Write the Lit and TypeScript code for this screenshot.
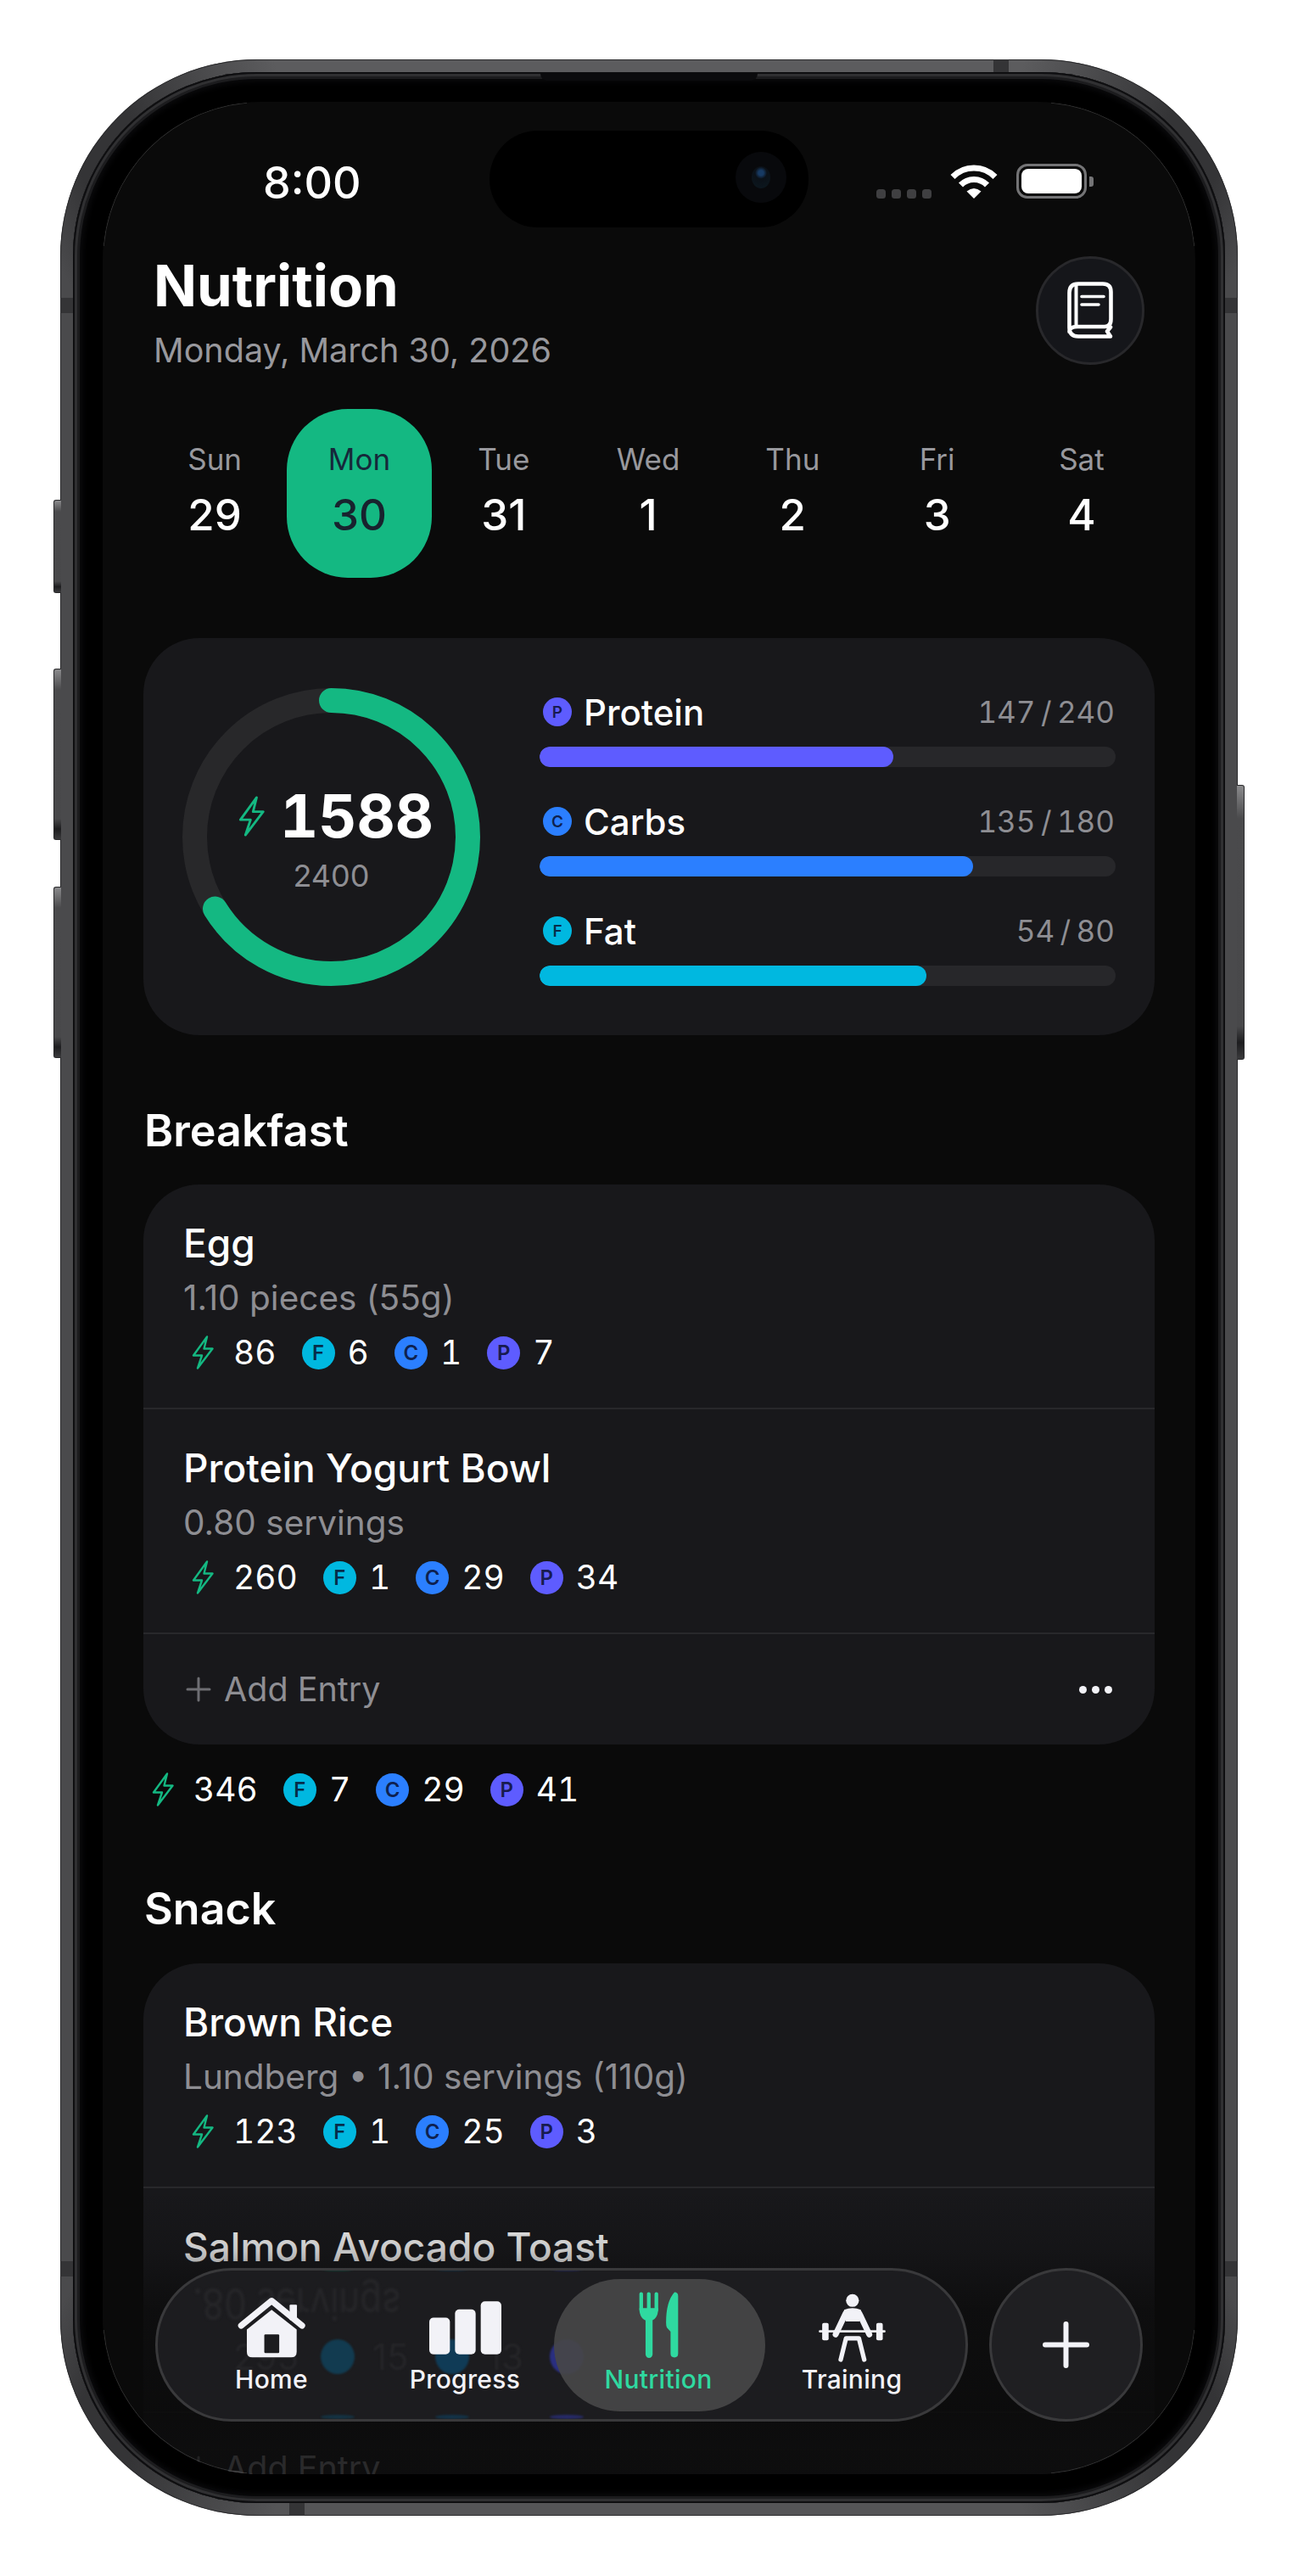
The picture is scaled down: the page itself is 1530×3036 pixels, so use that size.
import { LitElement, html, css, svg } from "lit";
import { customElement } from "lit/decorators.js";

type Macro = { cal: number; f: number; c: number; p: number };
type Food = { name: string; sub: string; macro: Macro };

const DAYS = [
  ["Sun", "29"], ["Mon", "30"], ["Tue", "31"], ["Wed", "1"], ["Thu", "2"], ["Fri", "3"], ["Sat", "4"],
];
const GOALS = [
  { key: "p", letter: "P", name: "Protein", val: 147, max: 240, pct: 61.4 },
  { key: "c", letter: "C", name: "Carbs", val: 135, max: 180, pct: 75.3 },
  { key: "f", letter: "F", name: "Fat", val: 54, max: 80, pct: 67.1 },
];
const BREAKFAST: Food[] = [
  { name: "Egg", sub: "1.10 pieces (55g)", macro: { cal: 86, f: 6, c: 1, p: 7 } },
  { name: "Protein Yogurt Bowl", sub: "0.80 servings", macro: { cal: 260, f: 1, c: 29, p: 34 } },
];
const SNACK: Food[] = [
  { name: "Brown Rice", sub: "Lundberg • 1.10 servings (110g)", macro: { cal: 123, f: 1, c: 25, p: 3 } },
  { name: "Salmon Avocado Toast", sub: "0.80 servings", macro: { cal: 295, f: 15, c: 13, p: 30 } },
];
const RING_R = 161;
const RING_C = 2 * Math.PI * RING_R;

const bolt = (cls = "bolt") => html`<svg class=${cls} viewBox="0 0 26 40" fill="none" stroke="#14b882" stroke-width="2.4" stroke-linejoin="round" stroke-linecap="round">
  <path d="M18 1.5 2 23.5h10L7 38.5 24.5 15.5H14.5Z"/></svg>`;

const homeIcon = html`<svg class="i-home" viewBox="265 110 245 220">
  <path d="M280 212 388 124 496 212" fill="none" stroke="#f2f2f7" stroke-width="22" stroke-linecap="round" stroke-linejoin="round"/>
  <rect x="452" y="138" width="26" height="55" rx="3" fill="#f2f2f7"/>
  <path d="M388 156 300 226V305Q300 325 320 325H457Q477 325 477 305V226Z" fill="#f2f2f7"/>
  <rect x="362" y="243" width="53" height="67" rx="4" fill="#1c1c1f"/></svg>`;
const barsIcon = html`<svg class="i-bars" viewBox="945 127 255 188" fill="#f2f2f7">
  <rect x="945" y="185" width="73" height="130" rx="15"/>
  <rect x="1036" y="156" width="73" height="159" rx="15"/>
  <rect x="1127" y="127" width="73" height="188" rx="15"/></svg>`;
const forkIcon = html`<svg class="i-fork" viewBox="20 18 148 240">
  <g stroke="#2fd9a0" stroke-linecap="round" fill="none">
    <path d="M31.5 28V85M58.5 28V85M85.5 28V85" stroke-width="13"/>
    <path d="M59.5 120V243" stroke-width="25"/></g>
  <path d="M25 78H92Q92 122 59 124 25 122 25 78Z" fill="#2fd9a0"/>
  <path d="M150 22Q163 22 163 36V240Q163 254 150 254 136 254 136 240V162L123 148Q120 143 120 130 120 55 150 22Z" fill="#2fd9a0"/></svg>`;
const liftIcon = html`<svg class="i-lift" viewBox="660 20 238 245">
  <circle cx="780" cy="45" r="23" fill="#f2f2f7"/>
  <g stroke="#f2f2f7" fill="none" stroke-linecap="round" stroke-linejoin="round">
    <path d="M756 90 720 166M804 90 840 166" stroke-width="21"/>
    <path d="M664 155H894" stroke-width="8"/>
    <path d="M738 256 757 180H803L822 256" stroke-width="16"/></g>
  <path d="M750 78Q780 66 810 78L806 120H756Z" fill="#f2f2f7"/>
  <rect x="672" y="125" width="23" height="62" rx="6" fill="#f2f2f7"/>
  <rect x="865" y="125" width="23" height="62" rx="6" fill="#f2f2f7"/></svg>`;

@customElement("app-root")
export class AppRoot extends LitElement {
  static styles = css`
    :host { display: block; width: 1530px; height: 3036px; background: #fff; font-family: Inter, "Liberation Sans", sans-serif; overflow: hidden; }
    .stage { padding: 70px 0 0 71px; }
    .phone {
      position: relative; width: 1388px; height: 2895px; box-sizing: border-box; padding: 15px;
      border-radius: 232px;
      background: conic-gradient(#5c5c5e 0 17deg, #343436 24deg 27deg, #4a4a4c 30deg 150deg, #343436 153deg 156deg, #555557 163deg 197deg, #343436 204deg 207deg, #4a4a4c 210deg 330deg, #343436 333deg 336deg, #5c5c5e 343deg);
      box-shadow: inset 0 0 0 1px #2c2c2e;
    }
    .bezel {
      width: 100%; height: 100%; box-sizing: border-box; padding: 35px; border-radius: 217px; background: #000;
      box-shadow:
        inset 0 0 0 2px #0e0e10,
        inset 0 0 0 5px #303032,
        inset 0 0 0 8px #1c1c1e,
        inset 0 0 7px 11px #0b0b0d;
    }
    .btn { position: absolute; background: linear-gradient(#8a8a8c 0, #4a4a4c 12%, #48484a 88%, #1d1d1f 94%, #3a3a3c 100%); border: 1px solid #2a2a2c; box-sizing: border-box; }
    .btn.l { left: -8px; width: 9px; border-radius: 3px 0 0 3px; border-right: 0; }
    .btn.r { right: -8px; width: 9px; border-radius: 0 3px 3px 0; border-left: 0; }
    .b1 { top: 519px; height: 110px; }
    .b2 { top: 718px; height: 202px; }
    .b3 { top: 975px; height: 202px; }
    .b4 { top: 855px; height: 324px; }
    .ant { position: absolute; background: #343436; }
    .ant.v { width: 15px; height: 18px; }
    .ant.h { width: 18px; height: 15px; }
    .a1 { left: 0; top: 281px; } .a2 { right: 0; top: 281px; }
    .a3 { left: 0; top: 2595px; } .a4 { right: 0; top: 2595px; }
    .a5 { left: 1100px; top: 0; } .a6 { left: 270px; bottom: 0; }
    .speaker { position: absolute; left: 566px; top: 16px; width: 256px; height: 9px; background: #0b0b0d; border-radius: 0 0 8px 8px; }

    .screen { position: relative; width: 1288px; height: 2796px; background: #0a0a0a; border-radius: 186px; overflow: hidden; color: #fff; }
    .screen::after {
      content: ""; position: absolute; inset: 0; border-radius: 186px; border: 1px solid rgba(255,255,255,.16); pointer-events: none;
      -webkit-mask: linear-gradient(#000 0 0) 0 0/170px 170px no-repeat, linear-gradient(#000 0 0) 100% 0/170px 170px no-repeat,
        linear-gradient(#000 0 0) 0 100%/170px 170px no-repeat, linear-gradient(#000 0 0) 100% 100%/170px 170px no-repeat;
      mask: linear-gradient(#000 0 0) 0 0/170px 170px no-repeat, linear-gradient(#000 0 0) 100% 0/170px 170px no-repeat,
        linear-gradient(#000 0 0) 0 100%/170px 170px no-repeat, linear-gradient(#000 0 0) 100% 100%/170px 170px no-repeat;
    }
    .island { position: absolute; left: 456px; top: 34px; width: 376px; height: 114px; border-radius: 57px; background: #000; }
    .cam { position: absolute; left: 290px; top: 25px; width: 60px; height: 60px; border-radius: 50%; background: #08090c; display: flex; align-items: center; justify-content: center; }
    .cam i { display: block; width: 22px; height: 26px; border-radius: 50%; background: radial-gradient(circle at 50% 30%, #173a63 0 3px, #0b1118 7px, #0c1820 100%); }

    .status { height: 150px; box-sizing: border-box; padding: 66px 120px 0 189px; display: flex; align-items: flex-start; }
    .time { font-size: 52px; line-height: 60px; font-weight: 550; }
    .sys { margin-left: auto; display: flex; align-items: flex-end; margin-top: 7px; }
    .dots { display: flex; gap: 7px; margin-right: 22px; }
    .dots i { display: block; width: 11px; height: 11px; border-radius: 3.5px; background: #3f3f41; }
    .wifi { width: 56px; height: 41px; display: block; margin-right: 22px; }
    .batt { width: 83px; height: 41px; box-sizing: border-box; border: 3px solid #747476; border-radius: 13px; padding: 3px 3px; }
    .batt i { display: block; height: 100%; width: 100%; border-radius: 8px; background: #fff; }
    .tip { width: 5px; height: 12px; margin: 0 0 14px 3px; background: #747476; border-radius: 0 3px 3px 0; }

    .header { display: flex; align-items: center; justify-content: space-between; padding: 25px 60px 0 60px; }
    h1 { margin: 0; font-size: 67px; line-height: 84px; font-weight: 700; }
    .date { margin-top: 7px; font-size: 39.5px; line-height: 54px; color: #98989d; }
    .round { width: 128px; height: 128px; margin-top: -3px; box-sizing: border-box; border-radius: 50%; background: #15161a; border: 3px solid #28282b; display: flex; align-items: center; justify-content: center; }
    .book { width: 80px; height: 85px; display: block; }

    .cal { display: grid; grid-template-columns: repeat(7, 170.3px); margin: 42px 0 0 47px; }
    .day { height: 199px; box-sizing: border-box; padding-top: 37px; border-radius: 72px; text-align: center; }
    .day b { display: block; font-size: 35px; line-height: 44px; font-weight: 400; color: #98989d; }
    .day span { display: block; margin-top: 14px; font-size: 51px; line-height: 60px; font-weight: 550; }
    .day.on { background: #14b882; }
    .day.on b { color: #16283a; }
    .day.on span { color: #18222e; }

    .card { margin: 0 48px; background: #18181b; border-radius: 66px; }
    .summary { margin-top: 71px; height: 468px; display: flex; align-items: center; padding: 0 46px 0 46px; box-sizing: border-box; }
    .ringbox { position: relative; width: 351px; height: 351px; flex: none; }
    .ringbox > svg { display: block; width: 351px; height: 351px; transform: rotate(-90deg); }
    .ringtxt { position: absolute; inset: 4px 0 0; display: flex; flex-direction: column; align-items: center; justify-content: center; }
    .bigrow { display: flex; align-items: center; margin-left: 11px; height: 80px; }
    .bolt-lg { width: 31px; height: 50px; display: block; margin-right: 18px; }
    .big { font-size: 70px; line-height: 80px; font-weight: 700; font-variant-numeric: tabular-nums; }
    .goal { margin-top: 8px; font-size: 36px; line-height: 44px; color: #8e8e93; }
    .bars { flex: 1; margin-left: 70px; margin-top: 3px; display: flex; flex-direction: column; gap: 38px; }
    .head { display: flex; align-items: center; height: 50px; box-sizing: content-box; padding: 1px 1px 0 4px; margin-bottom: 16px; }
    .head .badge { width: 34px; height: 34px; font-size: 19px; margin-right: 14px; }
    .head .nm { font-size: 42px; font-weight: 500; }
    .head .vl { margin-left: auto; font-size: 35px; color: #8e8e93; font-variant-numeric: tabular-nums; word-spacing: -3px; }
    .track { height: 24px; border-radius: 12px; background: #27272a; overflow: hidden; }
    .track i { display: block; height: 100%; border-radius: 12px; }
    .bg-p { background: #5e5cff; } .bg-c { background: #2b7fff; } .bg-f { background: #00b8e0; }

    .badge { flex: none; width: 39px; height: 39px; border-radius: 50%; display: flex; align-items: center; justify-content: center; font-size: 24px; font-weight: 600; color: rgba(8,12,40,.82); }
    h2 { margin: 80px 48px 30px 49px; font-size: 52px; line-height: 66px; font-weight: 600; }
    h2.next { margin-top: 88px; margin-bottom: 31px; }
    .item { padding: 42px 47px 45px; border-bottom: 2px solid #28282b; }
    .name { font-size: 46px; line-height: 54px; font-weight: 550; }
    .sub { margin-top: 8px; font-size: 40.5px; line-height: 60px; color: #8e8e93; }
    .macros { display: flex; align-items: center; height: 40px; margin-top: 14px; }
    .bolt { flex: none; width: 26px; height: 40px; display: block; margin: 0 23px 0 10px; }
    .num { font-size: 39px; line-height: 40px; font-weight: 400; font-variant-numeric: tabular-nums; }
    .macros .badge { margin-left: 30px; }
    .macros .badge + .num { margin-left: 15px; }
    .total { margin: 33px 48px 0 48px; }
    .add { height: 130px; display: flex; align-items: center; padding: 0 50px 0 50px; color: #8e8e93; font-size: 39.5px; }
    .plus { width: 30px; height: 30px; display: block; margin-right: 15px; }
    .more { margin-left: auto; display: flex; gap: 6px; }
    .more i { display: block; width: 9px; height: 9px; border-radius: 50%; background: #f2f2f7; }

    .fade { position: absolute; left: 0; right: 0; bottom: 0; height: 336px; pointer-events: none;
      background: linear-gradient(rgba(10,10,10,0) 0, rgba(10,10,10,.22) 21%, rgba(10,10,10,.72) 42%, rgba(10,10,10,.88) 78%, rgba(10,10,10,.76) 92%, rgba(10,10,10,.76) 100%); }
    .dock { position: absolute; left: 62px; top: 2553px; display: flex; gap: 25px; }
    .bar { position: relative; width: 958px; height: 181px; box-sizing: border-box; border-radius: 90px; background: #1c1c1f; border: 3px solid #39393b; overflow: hidden; display: flex; padding: 10px 0 0 20px; }
    .fab { width: 181px; height: 181px; box-sizing: border-box; border-radius: 50%; background: #1f1f22; border: 3px solid #39393b; display: flex; align-items: center; justify-content: center; }
    .fab svg { width: 55px; height: 55px; display: block; }
    .ghost { position: absolute; inset: -3px; pointer-events: none; overflow: hidden; }
    .g { position: absolute; filter: blur(1px); }
    .g-sv { left: 44px; top: 20px; font-size: 42px; line-height: 44px; color: #262629; transform: scaleY(-1.2); white-space: nowrap; filter: blur(1.4px); }
    .g-n { top: 84px; font-size: 42px; line-height: 42px; color: #252528; }
    .g-dot { top: 84px; width: 40px; height: 41px; border-radius: 50%; }
    .g-top { top: -1px; width: 38px; height: 4px; border-radius: 50%; }
    .g-bot { top: 173px; width: 40px; height: 5px; border-radius: 50%; opacity: .75; }
    .teal { background: #123b50; } .blue { background: #103b56; } .vio { background: #2a2f80; } .grn { background: #0e5a45; }

    .tab { position: relative; flex: none; width: 228px; height: 156px; box-sizing: border-box; padding-top: 14px; text-align: center; }
    .tab.on::before { content: ""; position: absolute; left: -9px; right: -12px; top: 0; bottom: 0; border-radius: 78px; background: rgba(70,70,72,.92); }
    .ico { position: relative; height: 87px; display: flex; align-items: center; justify-content: center; }
    .ico svg { display: block; }
    .lbl { position: relative; margin-top: -1px; font-size: 30px; line-height: 36px; font-weight: 550; letter-spacing: .3px; color: #f2f2f7; }
    .tab.on .lbl { color: #2fd9a0; }
    .i-home { width: 82px; height: 73px; }
    .i-bars { width: 85px; height: 63px; }
    .i-fork { width: 49px; height: 80px; margin-top: -7px; }
    .i-lift { width: 79px; height: 81px; }
  `;

  private badge(k: string) {
    return html`<span class="badge bg-${k}">${k.toUpperCase()}</span>`;
  }
  private macroRow(m: Macro) {
    return html`<div class="macros">${bolt()}<span class="num">${m.cal}</span>
      ${this.badge("f")}<span class="num">${m.f}</span>
      ${this.badge("c")}<span class="num">${m.c}</span>
      ${this.badge("p")}<span class="num">${m.p}</span></div>`;
  }
  private food(f: Food) {
    return html`<div class="item"><div class="name">${f.name}</div><div class="sub">${f.sub}</div>${this.macroRow(f.macro)}</div>`;
  }
  private addRow(more: boolean) {
    return html`<div class="add">
      <svg class="plus" viewBox="0 0 30 30" stroke="#6e6e73" stroke-width="3" stroke-linecap="round"><path d="M15 2V28M2 15H28"/></svg>
      <span>Add Entry</span>
      ${more ? html`<span class="more"><i></i><i></i><i></i></span>` : ""}</div>`;
  }

  render() {
    const pct = 1588 / 2400;
    return html`<div class="stage"><div class="phone">
      <div class="btn l b1"></div><div class="btn l b2"></div><div class="btn l b3"></div><div class="btn r b4"></div>
      <div class="ant v a1"></div><div class="ant v a2"></div><div class="ant v a3"></div><div class="ant v a4"></div>
      <div class="ant h a5"></div><div class="ant h a6"></div>
      <div class="bezel">
      <div class="screen">
        <div class="status">
          <div class="time">8:00</div>
          <div class="sys">
            <div class="dots"><i></i><i></i><i></i><i></i></div>
            <svg class="wifi" viewBox="0 0 56 41" fill="none" stroke="#fff" stroke-width="7">
              <path d="M3 15.5A35 35 0 0 1 53 15.5"/><path d="M12.5 25A21.5 21.5 0 0 1 43.5 25"/>
              <path d="M28 41 19.5 32.5Q28 25.5 36.5 32.5Z" fill="#fff" stroke="none"/></svg>
            <div class="batt"><i></i></div><div class="tip"></div>
          </div>
        </div>
        <div class="island"><div class="cam"><i></i></div></div>

        <div class="header">
          <div><h1>Nutrition</h1><div class="date">Monday, March 30, 2026</div></div>
          <div class="round"><svg class="book" viewBox="0 0 80 85" fill="none" stroke="#fff" stroke-linecap="round" stroke-linejoin="round">
            <path d="M15.5 21Q15.5 10.5 26 10.5H55Q64.5 10.5 64.5 20V52Q64.5 61 57 61H25Q15.5 61 15.5 67M15.5 21V62Q15.5 72.5 26 72.5H64L60 66.5 64 61.5" stroke-width="4.6"/>
            <path d="M23.5 11V60" stroke-width="4"/>
            <path d="M30 25.5H56M30 35H50" stroke-width="3.6"/></svg></div>
        </div>

        <div class="cal">${DAYS.map(([d, n], i) => html`<div class="day ${i === 1 ? "on" : ""}"><b>${d}</b><span>${n}</span></div>`)}</div>

        <div class="card summary">
          <div class="ringbox">
            <svg viewBox="0 0 351 351" fill="none" stroke-width="29">
              ${svg`<circle cx="175.5" cy="175.5" r=${RING_R} stroke="#28282a"/>
              <circle cx="175.5" cy="175.5" r=${RING_R} stroke="#14b882" stroke-linecap="round" stroke-dasharray="${RING_C * pct} ${RING_C}"/>`}
            </svg>
            <div class="ringtxt">
              <div class="bigrow">${bolt("bolt-lg")}<span class="big">1588</span></div>
              <div class="goal">2400</div>
            </div>
          </div>
          <div class="bars">
            ${GOALS.map((g) => html`<div>
              <div class="head">${this.badge(g.key)}<span class="nm">${g.name}</span><span class="vl">${g.val} / ${g.max}</span></div>
              <div class="track"><i class="bg-${g.key}" style="width:${g.pct}%"></i></div>
            </div>`)}
          </div>
        </div>

        <h2>Breakfast</h2>
        <div class="card">${BREAKFAST.map((f) => this.food(f))}${this.addRow(true)}</div>
        <div class="total">${this.macroRow({ cal: 346, f: 7, c: 29, p: 41 })}</div>

        <h2 class="next">Snack</h2>
        <div class="card">${SNACK.map((f) => this.food(f))}${this.addRow(false)}</div>

        <div class="fade"></div>
        <div class="dock">
          <div class="bar">
            <div class="ghost" aria-hidden="true">
              <div class="g g-sv">.80 servings</div>
              <div class="g g-n" style="left:92px">295</div>
              <div class="g g-dot teal" style="left:195px"></div>
              <div class="g g-n" style="left:256px">15</div>
              <div class="g g-dot blue" style="left:330px"></div>
              <div class="g g-n" style="left:391px">13</div>
              <div class="g g-dot vio" style="left:465px"></div>
              <div class="g g-top grn" style="left:196px"></div>
              <div class="g g-top blue" style="left:331px"></div>
              <div class="g g-top vio" style="left:466px"></div>
              <div class="g g-bot teal" style="left:195px"></div>
              <div class="g g-bot blue" style="left:330px"></div>
              <div class="g g-bot vio" style="left:465px"></div>
            </div>
            <div class="tab"><div class="ico">${homeIcon}</div><div class="lbl">Home</div></div>
            <div class="tab"><div class="ico">${barsIcon}</div><div class="lbl">Progress</div></div>
            <div class="tab on"><div class="ico">${forkIcon}</div><div class="lbl">Nutrition</div></div>
            <div class="tab"><div class="ico">${liftIcon}</div><div class="lbl">Training</div></div>
          </div>
          <div class="fab"><svg viewBox="0 0 55 55" stroke="#f2f2f7" stroke-width="6" stroke-linecap="round"><path d="M27.5 3V52M3 27.5H52"/></svg></div>
        </div>
      </div>
      </div>
      <div class="speaker"></div>
    </div></div>`;
  }
}
